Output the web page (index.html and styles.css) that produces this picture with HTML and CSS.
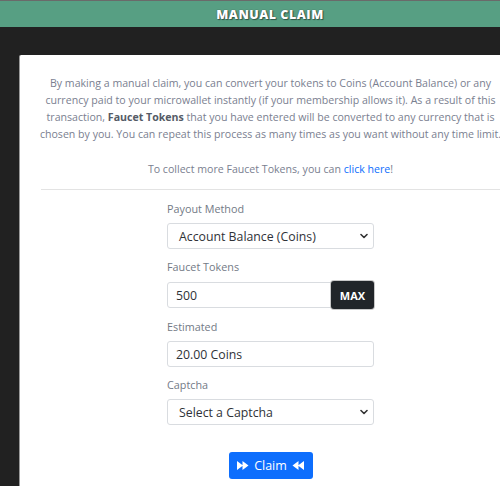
FILE: index.html
```html
<!DOCTYPE html>
<html>
<head>
<meta charset="utf-8">
<link rel="stylesheet" href="styles.css">
</head>
<body>
<div class="page">
  <header class="topbar"><h1 class="title">MANUAL CLAIM</h1></header>
  <main class="dark">
    <section class="card">
      <p class="intro">By making a manual claim, you can convert your tokens to Coins (Account Balance) or any<br>currency paid to your microwallet instantly (if your membership allows it). As a result of this<br>transaction, <b>Faucet Tokens</b> that you have entered will be converted to any currency that is<br>chosen by you. You can repeat this process as many times as you want without any time limit.</p>
      <p class="collect">To collect more Faucet Tokens, you can <a href="#">click here</a>!</p>
      <hr class="sep">
      <form class="form">
        <div class="group">
          <label class="lbl">Payout Method</label>
          <div class="control select"><span>Account Balance (Coins)</span><svg class="chev" width="8" height="6" viewBox="0 0 8 6"><path d="M1 1.5 L4 4.5 L7 1.5" fill="none" stroke="#333" stroke-width="1.6" stroke-linecap="round" stroke-linejoin="round"/></svg></div>
        </div>
        <div class="group">
          <label class="lbl">Faucet Tokens</label>
          <div class="inputgroup">
            <div class="control input grow">500</div>
            <button type="button" class="max">MAX</button>
          </div>
        </div>
        <div class="group">
          <label class="lbl">Estimated</label>
          <div class="control input">20.00 Coins</div>
        </div>
        <div class="group">
          <label class="lbl">Captcha</label>
          <div class="control select"><span>Select a Captcha</span><svg class="chev" width="8" height="6" viewBox="0 0 8 6"><path d="M1 1.5 L4 4.5 L7 1.5" fill="none" stroke="#333" stroke-width="1.6" stroke-linecap="round" stroke-linejoin="round"/></svg></div>
        </div>
        <div class="actions">
          <button type="button" class="claim">
            <svg width="12" height="9" viewBox="0 0 12 9"><path d="M0 0 L6 4.5 L0 9 Z M5.5 0 L11.5 4.5 L5.5 9 Z" fill="#fff"/></svg>
            <span>Claim</span>
            <svg width="12" height="9" viewBox="0 0 12 9"><path d="M12 0 L6 4.5 L12 9 Z M6.5 0 L0.5 4.5 L6.5 9 Z" fill="#fff"/></svg>
          </button>
        </div>
      </form>
    </section>
  </main>
</div>
</body>
</html>
```
FILE: styles.css
```css
* { box-sizing: border-box; }
html, body { margin: 0; padding: 0; }
body {
  width: 500px;
  height: 486px;
  overflow: hidden;
  background: #212121;
  font-family: "Open Sans", "DejaVu Sans", sans-serif;
}
.page { width: 540px; }
.topbar {
  height: 27px;
  background: #579f83;
  border-top: 1px solid #6a6a6a;
  display: flex;
  align-items: center;
  justify-content: center;
}
.title {
  margin: 0;
  color: #fff;
  font-size: 12.5px;
  font-weight: 800;
  letter-spacing: 0.5px;
  text-shadow: 0 0 1px #333, 1px 1px 1px rgba(0,0,0,0.45);
}
.dark {
  padding: 28px 0 0 19px;
}
.card {
  width: 502px;
  min-height: 440px;
  background: #fff;
  border-left: 1px solid #9a9a9a;
  border-top-left-radius: 2px;
  padding: 20px 21px 0 21px;
}
.intro {
  margin: 0 -10px;
  text-align: center;
  color: #7a8090;
  font-size: 10.6px;
  line-height: 17px;
  white-space: nowrap;
}
.intro b { color: #555b66; font-weight: 700; }
.collect {
  margin: 18px 0 0 0;
  text-align: center;
  color: #7a8090;
  font-size: 10.6px;
  line-height: 17px;
}
.collect a { color: #0d6efd; text-decoration: none; }
.sep {
  margin: 11px 0 11px 0;
  border: 0;
  border-top: 1px solid #e3e3e3;
}
.form {
  width: 207px;
  margin: 0 auto;
}
.group { margin-bottom: 10px; }
.lbl {
  display: block;
  color: #737a86;
  font-size: 10.8px;
  line-height: 16px;
  margin-bottom: 6px;
}
.control {
  height: 26px;
  border: 1px solid #d9dce0;
  border-radius: 3px;
  background: #fff;
  color: #2f3237;
  font-size: 12.3px;
  display: flex;
  align-items: center;
}
.select { padding: 0 5px 0 11px; justify-content: space-between; }
.input { padding: 0 8px; }
.inputgroup { display: flex; align-items: center; }
.grow { flex: 1; border-top-right-radius: 0; border-bottom-right-radius: 0; }
.max {
  height: 28px;
  width: 43px;
  margin-left: -1px;
  background: #212529;
  color: #fff;
  border: 0;
  border-radius: 3px;
  box-shadow: 0 0 0 1px #c8c8c8;
  font-family: inherit;
  font-size: 11px;
  font-weight: 700;
  padding: 0;
}
.actions {
  display: flex;
  justify-content: center;
  padding-top: 17px;
}
.claim {
  width: 84px;
  height: 27px;
  background: #0d6efd;
  border: 0;
  border-radius: 3px;
  color: #fff;
  font-family: inherit;
  font-size: 12.5px;
  display: flex;
  align-items: center;
  justify-content: center;
  gap: 5px;
  padding: 0;
}
```
